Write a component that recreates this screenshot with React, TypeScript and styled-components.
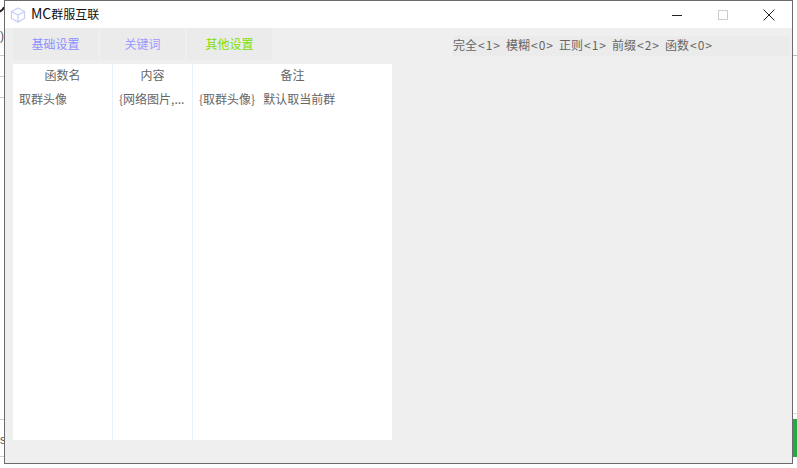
import React from "react";
import styled, { createGlobalStyle } from "styled-components";

const Global = createGlobalStyle`
  html, body { margin: 0; padding: 0; background: #fff; overflow: hidden; }
  body { font-family: "Noto Sans CJK SC", "Liberation Sans", sans-serif; }
`;
const Desktop = styled.div`
  position: relative;
  width: 797px;
  height: 468px;
  overflow: hidden;
  background: #fff;
`;
const Scrap = styled.div<{ $x: number; $y: number; $w: number; $h: number; $c: string }>`
  position: absolute;
  left: ${(p) => p.$x}px;
  top: ${(p) => p.$y}px;
  width: ${(p) => p.$w}px;
  height: ${(p) => p.$h}px;
  background: ${(p) => p.$c};
`;
const ScrapText = styled.span<{ $x: number; $y: number }>`
  position: absolute;
  left: ${(p) => p.$x}px;
  top: ${(p) => p.$y}px;
  font-family: "Liberation Sans", sans-serif;
  font-size: 12px;
  line-height: 14px;
  color: #555;
`;
const Corner = styled.svg`
  position: absolute;
  left: 0;
  top: 0;
`;
const Win = styled.div`
  position: absolute;
  left: 4px;
  top: 0;
  width: 787px;
  height: 462px;
  border: 1px solid #6b6b6b;
  display: flex;
  flex-direction: column;
  background: #efefef;
`;
const TitleBar = styled.div`
  flex: 0 0 27px;
  height: 27px;
  background: #fff;
  display: flex;
  align-items: center;
  padding-left: 5px;
`;
const AppTitle = styled.div`
  margin-left: 5px;
  font-size: 12px;
  line-height: 25px;
  height: 27px;
  color: #111;
  flex: 1;
`;
const Latin = styled.span`
  font-size: 14px;
`;
const WinBtn = styled.div`
  width: 46px;
  height: 27px;
  display: flex;
  align-items: center;
  justify-content: center;
`;
const Body = styled.div`
  flex: 1;
  padding: 0 0 0 8px;
  display: flex;
  flex-direction: column;
`;
const TopRow = styled.div`
  display: flex;
  height: 32px;
`;
const Tabs = styled.div`
  display: flex;
  gap: 2px;
  width: 440px;
`;
const Tab = styled.div<{ $c: string }>`
  width: 85px;
  height: 32px;
  padding-bottom: 2px;
  box-sizing: border-box;
  background: #ebebeb;
  color: ${(p) => p.$c};
  font-size: 12px;
  display: flex;
  align-items: center;
  justify-content: center;
`;
const Status = styled.div`
  margin-top: 8px;
  width: 336px;
  height: 20px;
  background: #ebebeb;
  color: #666;
  font-size: 12px;
  line-height: 18px;
  display: flex;
`;
const Seg = styled.div`
  width: 53px;
  white-space: pre;
`;
const Count = styled.span`
  letter-spacing: 1px;
  margin-left: 1px;
`;
const Table = styled.div`
  margin-top: 4px;
  width: 379px;
  height: 376px;
  background: #fff;
  display: grid;
  grid-template-columns: 99px 80px 200px;
`;
const Col = styled.div<{ $sep?: boolean }>`
  border-left: ${(p) => (p.$sep ? "1px solid #e8f1ff" : "0")};
  color: #666;
  font-size: 12px;
  min-width: 0;
`;
const Head = styled.div`
  height: 24px;
  line-height: 22px;
  text-align: center;
  background: #fff;
`;
const Cell = styled.div`
  height: 24px;
  line-height: 22px;
  padding-left: 6px;
  white-space: pre;
  overflow: hidden;
`;
const Remark = styled.span`
  margin-left: 8px;
`;

const counts: [string, number][] = [
  ["完全", 1],
  ["模糊", 0],
  ["正则", 1],
  ["前缀", 2],
  ["函数", 0],
];

export default function App() {
  return (
    <Desktop>
      <Global />
      <Corner width="4" height="14" viewBox="0 0 4 14" fill="none">
        <path d="M0 11.5 C2 10.5 3.2 9 4 7" stroke="#222" strokeWidth="2" />
      </Corner>
      <ScrapText $x={0} $y={29}>)</ScrapText>
      <Scrap $x={0} $y={55} $w={4} $h={1} $c="#ccc" />
      <Scrap $x={0} $y={76} $w={4} $h={1} $c="#ccc" />
      <Scrap $x={0} $y={97} $w={4} $h={1} $c="#ccc" />
      <Scrap $x={0} $y={419} $w={4} $h={1} $c="#ccc" />
      <ScrapText $x={0} $y={433}>s</ScrapText>
      <Scrap $x={0} $y={456} $w={4} $h={1} $c="#ccc" />
      <Scrap $x={793} $y={413} $w={4} $h={1} $c="#ddd" />
      <Scrap $x={793} $y={419} $w={4} $h={38} $c="#28a745" />
      <Scrap $x={793} $y={55} $w={4} $h={1} $c="#bbb" />
      <Win>
        <TitleBar>
          <svg width="16" height="16" viewBox="0 0 16 16" fill="none" stroke="#c5ccf5" strokeWidth="1.2">
            <path d="M8 1 L14.5 4.5 V11.5 L8 15 L1.5 11.5 V4.5 Z M1.5 4.5 L8 8 L14.5 4.5 M8 8 V15" />
          </svg>
          <AppTitle><Latin>MC</Latin>群服互联</AppTitle>
          <WinBtn>
            <svg width="12" height="12" viewBox="0 0 12 12"><path d="M1 6.5H11" stroke="#222" strokeWidth="1" /></svg>
          </WinBtn>
          <WinBtn>
            <svg width="12" height="12" viewBox="0 0 12 12" fill="none"><rect x="1.5" y="1.5" width="9" height="9" stroke="#ccc" /></svg>
          </WinBtn>
          <WinBtn>
            <svg width="12" height="12" viewBox="0 0 12 12" fill="none"><path d="M0.5 0.5L11.5 11.5M11.5 0.5L0.5 11.5" stroke="#222" /></svg>
          </WinBtn>
        </TitleBar>
        <Body>
          <TopRow>
            <Tabs>
              <Tab $c="#8f8fff">基础设置</Tab>
              <Tab $c="#9a9aff">关键词</Tab>
              <Tab $c="#80e000">其他设置</Tab>
            </Tabs>
            <Status>
              {counts.map(([k, n]) => (
                <Seg key={k}>{k}<Count>&lt;{n}&gt;</Count></Seg>
              ))}
            </Status>
          </TopRow>
          <Table>
            <Col>
              <Head>函数名</Head>
              <Cell>取群头像</Cell>
            </Col>
            <Col $sep>
              <Head>内容</Head>
              <Cell>{"{网络图片,..."}</Cell>
            </Col>
            <Col $sep>
              <Head>备注</Head>
              <Cell>{"{取群头像}"}<Remark>默认取当前群</Remark></Cell>
            </Col>
          </Table>
        </Body>
      </Win>
    </Desktop>
  );
}
